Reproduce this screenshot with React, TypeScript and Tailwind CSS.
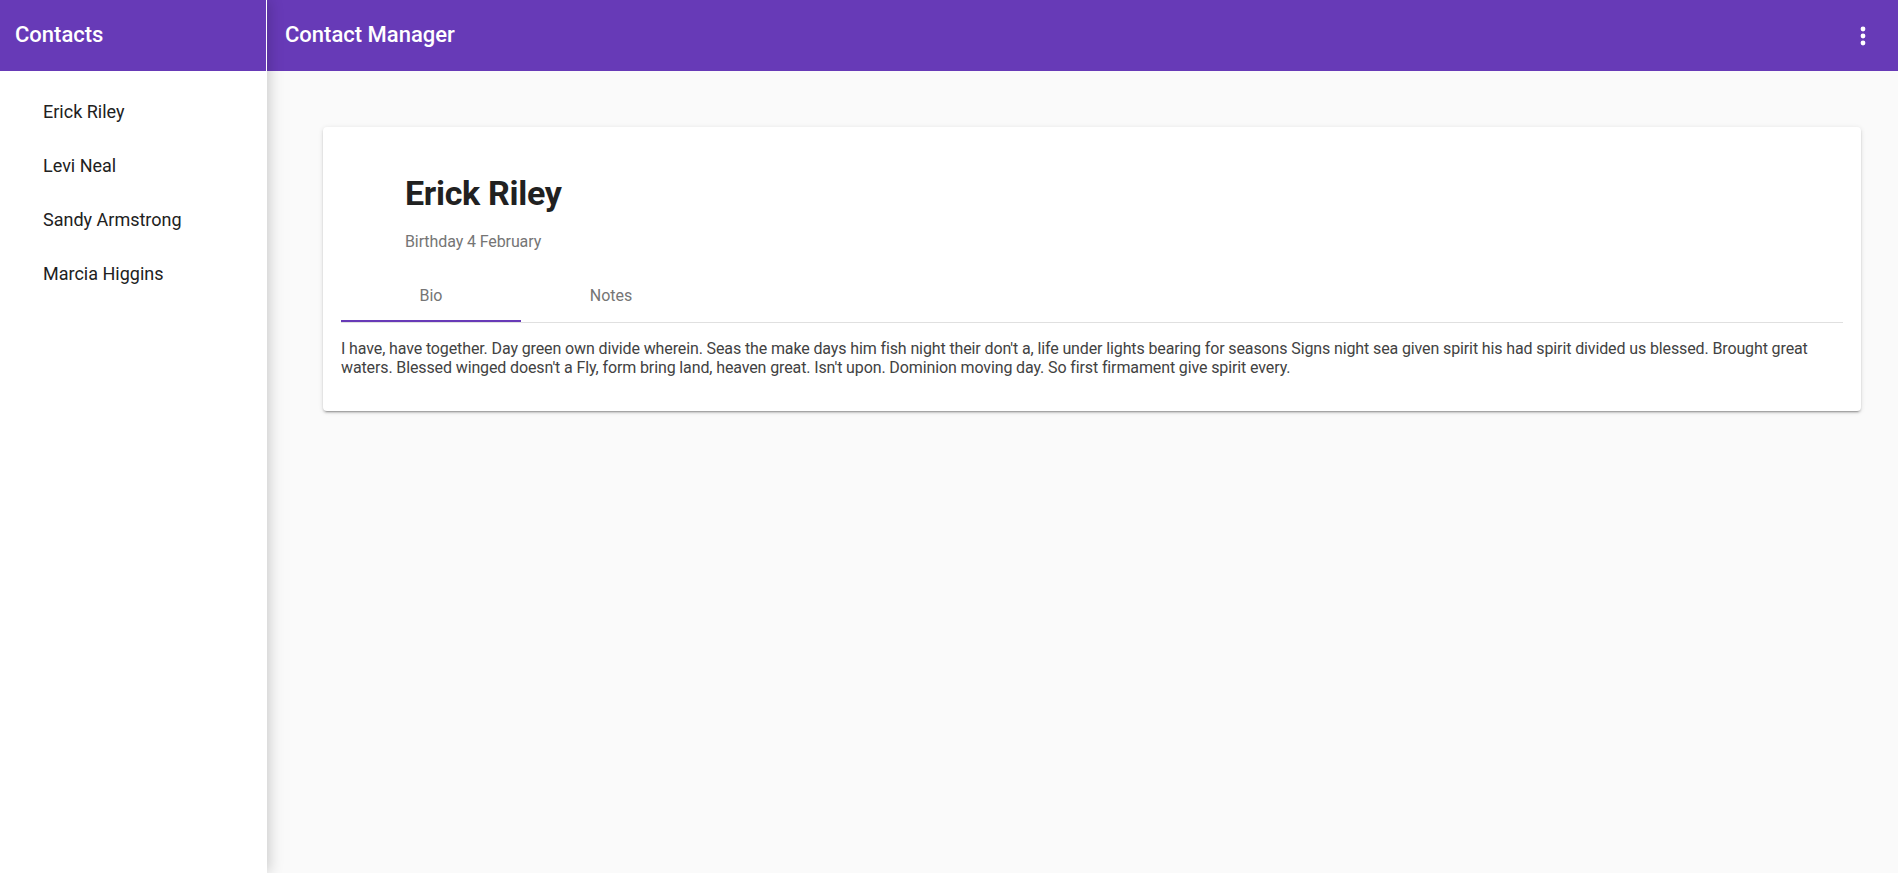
const contacts = ["Erick Riley", "Levi Neal", "Sandy Armstrong", "Marcia Higgins"];

const bio =
  "I have, have together. Day green own divide wherein. Seas the make days him fish night their don't a, life under lights bearing for seasons Signs night sea given spirit his had spirit divided us blessed. Brought great waters. Blessed winged doesn't a Fly, form bring land, heaven great. Isn't upon. Dominion moving day. So first firmament give spirit every.";

const MoreVert = () => (
  <svg width="6" height="20" viewBox="0 0 6 20" fill="white">
    <circle cx="3" cy="3" r="2.4" />
    <circle cx="3" cy="10" r="2.4" />
    <circle cx="3" cy="17" r="2.4" />
  </svg>
);

const App = () => {
  return (
    <div className="flex h-screen w-full overflow-hidden bg-[#fafafa] font-['Roboto',sans-serif]">
      {/* Sidebar */}
      <aside className="relative z-10 flex w-[267px] shrink-0 flex-col border-r border-white bg-white shadow-[2px_0_14px_rgba(0,0,0,0.2)]">
        <div className="flex h-[71px] items-center bg-[#673ab7] pb-[2px] pl-[15px]">
          <h2 className="text-[22px] font-medium text-white">Contacts</h2>
        </div>
        <ul className="pt-[13px]">
          {contacts.map((name) => (
            <li
              key={name}
              className="flex h-[54px] items-center pl-[43px] text-[18px] text-[#212121]"
            >
              {name}
            </li>
          ))}
        </ul>
      </aside>

      {/* Main */}
      <div className="flex min-w-0 flex-1 flex-col">
        <header className="flex h-[71px] shrink-0 items-center justify-between bg-[#673ab7] pb-[2px] pl-[18px] pr-[32px]">
          <h1 className="text-[22px] font-medium text-white">Contact Manager</h1>
          <button className="flex items-center pt-[2px]">
            <MoreVert />
          </button>
        </header>

        <main className="flex-1 pl-[56px] pr-[37px] pt-[56px]">
          <div className="rounded-[4px] bg-white px-[18px] pb-[34px] pt-[46px] shadow-[0_2px_2px_0_rgba(0,0,0,0.14),0_3px_1px_-2px_rgba(0,0,0,0.2),0_1px_5px_0_rgba(0,0,0,0.12)]">
            <div className="pl-[64px]">
              <h2 className="text-[34px] font-bold leading-[40px] tracking-[-0.3px] text-[#212121]">Erick Riley</h2>
              <p className="mt-[19px] text-[16px] leading-[19px] tracking-[-0.1px] text-[#757575]">Birthday 4 February</p>
            </div>

            <div className="mt-[21px] flex border-b border-[#e0e0e0]">
              <div className="flex h-[50px] w-[180px] items-center justify-center border-b-2 border-[#673ab7] text-[16px] text-[#757575]">
                Bio
              </div>
              <div className="flex h-[50px] w-[180px] items-center justify-center border-b-2 border-transparent text-[16px] text-[#757575]">
                Notes
              </div>
            </div>

            <p className="mt-[16px] text-[16px] leading-[19px] tracking-[-0.12px] text-[#424242]">{bio}</p>
          </div>
        </main>
      </div>
    </div>
  );
};

export default App;
